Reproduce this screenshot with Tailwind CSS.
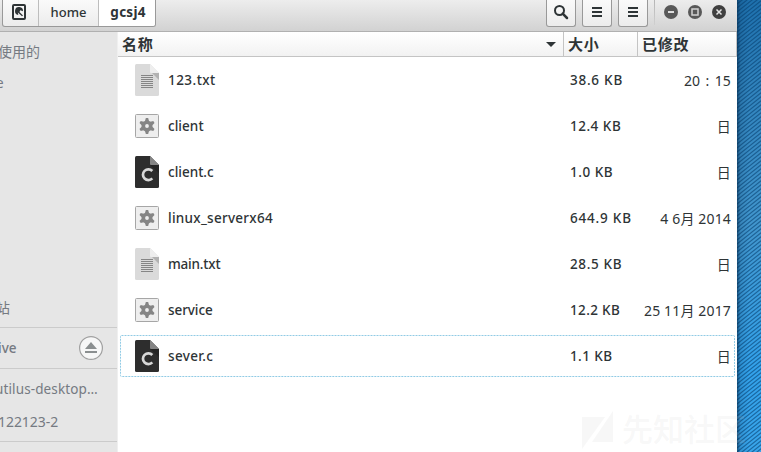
<!DOCTYPE html>
<html lang="zh-CN">
<head>
<meta charset="utf-8">
<title>gcsj4</title>
<script src="https://cdn.jsdelivr.net/npm/@tailwindcss/browser@4"></script>
</head>
<body class="relative w-[761px] h-[452px] overflow-hidden flex bg-white text-[#2e3436] text-[13.5px] font-['Noto_Sans','Noto_Sans_CJK_SC',sans-serif] whitespace-nowrap">
<svg width="0" height="0" class="absolute">
  <symbol id="text" viewBox="0 0 24 32">
    <path d="M1.5 0H15L24 9V30.5Q24 32 22.5 32H1.5Q0 32 0 30.5V1.5Q0 0 1.5 0Z" fill="#dadada"/>
    <path d="M15 0L24 9H16Q15 9 15 8Z" fill="#eeeeee"/>
    <path d="M17 9H24V16Z" fill="#b2b2b2"/>
    <path d="M6 11.5H18M6 13.5H18M6 15.5H18M6 17.5H18M6 19.5H18M6 21.5H18M6 23.5H18" stroke="#858585"/>
  </symbol>
  <symbol id="c" viewBox="0 0 24 32">
    <path d="M1.5 0H15L24 9V30.5Q24 32 22.5 32H1.5Q0 32 0 30.5V1.5Q0 0 1.5 0Z" fill="#2d2d2d"/>
    <path d="M15 9L24 17V9Z" fill="#242424"/><path d="M15 0L24 9H16Q15 9 15 8Z" fill="#858585"/>
    <path d="M17.300 15A5.400 5.400 0 1 0 17.300 22.400" fill="none" stroke="#d8d8d8" stroke-width="2.700"/>
  </symbol>
  <symbol id="gear" viewBox="0 0 24 24">
    <rect x=".5" y=".5" width="23" height="23" rx="1" fill="#eeeeee" stroke="#a6a6a6"/>
    <g fill="#858585"><path id="tooth" d="M10.800 4H13.200L14.500 9H9.500Z"/><use href="#tooth" transform="rotate(60 12 12)"/><use href="#tooth" transform="rotate(120 12 12)"/><use href="#tooth" transform="rotate(180 12 12)"/><use href="#tooth" transform="rotate(240 12 12)"/><use href="#tooth" transform="rotate(300 12 12)"/></g>
    <circle cx="12" cy="12" r="3.700" fill="none" stroke="#858585" stroke-width="3.600"/>
  </symbol>
</svg>

<div class="w-[737px] h-full flex flex-col shrink-0">
  <header class="h-8 shrink-0 flex items-start bg-linear-to-b from-[#ededed] to-[#d2d2d2] border-b border-[#b0b0b0]">
    <nav class="ml-[2px] w-[154px] h-[27px] flex border border-t-0 border-[#999] rounded-b-[3px] overflow-hidden bg-linear-to-b from-[#fafafa] to-[#ececec]">
      <div class="w-[36px] border-r border-[#bdbdbd] flex justify-center">
        <svg class="mt-1 -ml-[3px]" width="14" height="16" viewBox="0 0 14 16"><rect x="1" y="1" width="12" height="14" rx="1" fill="none" stroke="#2e3436" stroke-width="2"/><path d="M6.300 11A4 4 0 1 1 11 7.300L8.200 6.300 7.500 8 11 11.500 10 12.300 5.800 8.500Z" fill="#2e3436"/></svg>
      </div>
      <div class="w-[60px] border-r border-[#bdbdbd] pt-[2px] text-center leading-[20px] font-medium text-[13px]">home</div>
      <div class="flex-1 bg-white pt-[2px] pl-[2px] text-center leading-[20px] font-bold tracking-[.25px]">gcsj4</div>
    </nav>
    <div class="ml-[390px] w-[30px] h-[27px] border border-t-0 border-[#999] rounded-b-[3px] bg-linear-to-b from-[#fafafa] to-[#ececec] flex justify-center">
      <svg class="mt-1" width="16" height="16" fill="none" stroke="#2e3436"><circle cx="6.500" cy="6.500" r="4.500" stroke-width="2"/><path d="M9.700 9.700L14 14" stroke-width="2.500" stroke-linecap="round"/></svg>
    </div>
    <div class="ml-[6px] w-[30px] h-[27px] border border-t-0 border-[#999] rounded-b-[3px] bg-linear-to-b from-[#fafafa] to-[#ececec] flex justify-center">
      <svg class="mt-[6px]" width="10" height="12"><path d="M0 2H10M0 6H10M0 10H10" stroke="#2e3436" stroke-width="2"/></svg>
    </div>
    <div class="ml-[6px] w-[30px] h-[27px] border border-t-0 border-[#999] rounded-b-[3px] bg-linear-to-b from-[#fafafa] to-[#ececec] flex justify-center">
      <svg class="mt-[6px]" width="10" height="12"><path d="M0 2H10M0 6H10M0 10H10" stroke="#2e3436" stroke-width="2"/></svg>
    </div>
    <div class="ml-[6px] w-px h-[25px] bg-linear-to-b from-[#b5b5b5] to-[#d0d0d0]"></div>
    <svg class="ml-[9px] mt-[5px]" width="62" height="14" fill="none"><g fill="#585858"><circle cx="7" cy="7" r="7"/><circle cx="31" cy="7" r="7"/></g><circle cx="55" cy="7" r="7" fill="#404040"/><path d="M4 7H10" stroke="#dedede" stroke-width="2"/><rect x="28" y="4" width="6" height="6" stroke="#d2d2d2" stroke-width="1.500"/><path d="M52.500 4.500L57.500 9.500M57.500 4.500L52.500 9.500" stroke="#e6e6e6" stroke-width="1.500"/></svg>
  </header>

  <div class="flex flex-1 min-h-0">
    <aside class="w-[118px] shrink-0 flex flex-col bg-[#e6e6e6] border-r border-[#efefef] text-[#757a82] overflow-hidden">
      <div class="h-[38px] shrink-0 flex items-center -ml-[2px] text-[14px]">使用的</div>
      <div class="h-[27px] shrink-0 flex items-center -ml-[4px]">e</div>
      <div class="h-[230px] shrink-0 flex items-end pb-[9px] -ml-[4px] text-[14px] leading-[20px]">站</div>
      <div class="h-[42px] shrink-0 border-y border-[#cbcbcb] flex items-center justify-between pr-[14px]">
        <span class="-ml-[2px] font-medium">ive</span>
        <svg width="24" height="24"><circle cx="12" cy="12" r="11.400" fill="#f7f7f7" stroke="#a0a0a0" stroke-width="1.200"/><path d="M12 6L18 13H6ZM6 15H18V17H6Z" fill="#8b8f90"/></svg>
      </div>
      <div class="h-[40px] shrink-0 flex items-center -ml-[5px] tracking-[.12px]">utilus-desktop…</div>
      <div class="h-[33px] shrink-0 border-b border-[#cbcbcb] flex items-start pt-[3px] leading-[20px] -ml-[2px] text-[14px]"><span class="tracking-[-.06px]">122123-2</span></div>
    </aside>

    <main class="flex-1 min-w-0 flex flex-col bg-white">
      <div class="h-[25px] shrink-0 flex items-center border-b border-[#c4c4c4] bg-linear-to-b from-white to-[#f2f2f2] font-bold text-[15px] leading-[24px]">
        <div class="w-[446px] h-full border-r border-[#c4c4c4] pl-[4px] pr-[7px] flex items-center justify-between"><span class="tracking-[.7px]">名称</span><svg width="10" height="5"><path d="M0 0H10L5 5Z" fill="#2e3436"/></svg></div>
        <div class="w-[74px] h-full border-r border-[#c4c4c4] pl-[4px] tracking-[.7px]">大小</div>
        <div class="flex-1 h-full border-r border-[#c4c4c4] pl-[4px] tracking-[.8px]">已修改</div>
      </div>
      <div id="rows" class="flex flex-col"></div>
    </main>
  </div>
</div>

<svg class="shrink-0" width="24" height="452">
  <defs>
    <linearGradient id="blue" x2="0" y2="1"><stop stop-color="#1d70ad"/><stop offset=".2" stop-color="#3083bd"/><stop offset=".5" stop-color="#4196ce"/><stop offset=".82" stop-color="#32a2eb"/><stop offset="1" stop-color="#38a5eb"/></linearGradient>
    <linearGradient id="shade"><stop stop-color="#062d50" stop-opacity=".7"/><stop offset=".15" stop-color="#062d50" stop-opacity=".15"/><stop offset=".5" stop-color="#062d50" stop-opacity="0"/></linearGradient>
    <pattern id="stripe" width="5" height="4" patternUnits="userSpaceOnUse"><path d="M-1.250 1L1.250 -1M0 4L5 0M3.750 5L6.250 3" stroke="#073f70" stroke-opacity=".6" stroke-width="1.200"/></pattern>
  </defs>
  <rect width="24" height="452" fill="url(#blue)"/><rect width="24" height="452" fill="url(#stripe)"/><rect width="24" height="452" fill="url(#shade)"/>
</svg>

<div class="absolute left-[582px] top-[411px] w-[170px] h-[38px] flex items-center text-[#c8c8c8]/15 text-[31px] font-medium">
  <svg width="32" height="38" class="shrink-0 mr-[8px]"><path d="M0 6H23L0 38ZM31 0V31H10Z" fill="#b4b4b4" fill-opacity=".11"/></svg>
  <span class="leading-[34px] -mt-[2px]">先知社区</span>
</div>
<script>
const files = [
  ['text', '123.txt', '38.6 KB', '20 : 15', .45],
  ['gear', 'client', '12.4 KB', '日', .05],
  ['c', 'client.c', '1.0 KB', '日', 0],
  ['gear', 'linux_serverx64', '644.9 KB', '4 6月 2014', .28],
  ['text', 'main.txt', '28.5 KB', '日', -.2],
  ['gear', 'service', '12.2 KB', '25 11月 2017', -.08],
  ['c', 'sever.c', '1.1 KB', '日', .35]
];
const sizeSpacing = [.75, .5, .5, .8, .65, .35, .4];
document.getElementById('rows').innerHTML = files.map(([icon, name, size, date, spacing], i) => `
  <div class="relative h-[46px] flex items-center pl-[17px] pr-[6px]">
    <svg class="w-6 shrink-0" height="${icon === 'gear' ? 24 : 32}"><use href="#${icon}"/></svg>
    <span class="ml-[9px] w-[402px] font-medium pt-px" style="letter-spacing:${spacing}px">${name}</span>
    <span class="w-[66px] font-medium text-[13.5px] pt-px" style="letter-spacing:${sizeSpacing[i]}px">${size}</span>
    <span class="flex-1 text-right text-[14px] pt-px tracking-[.15px]" style="word-spacing:${i ? 0 : 1.5}px">${date}</span>
    ${i === 6 ? '<svg class="absolute left-[2px] top-[2px]" width="615" height="42"><rect x=".5" y=".5" width="614" height="41" rx="1" fill="none" stroke="#91cbe5" stroke-dasharray="2 1"/></svg>' : ''}
  </div>`).join('');
</script>
</body>
</html>
